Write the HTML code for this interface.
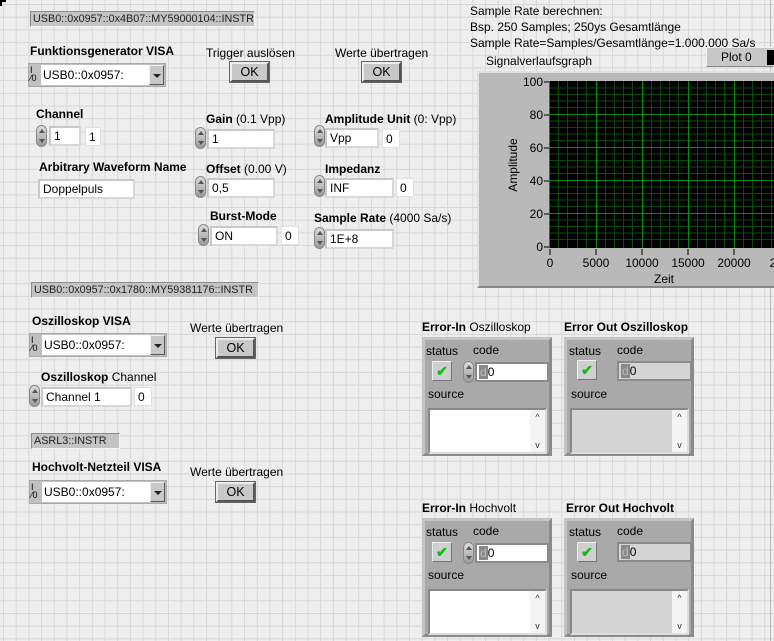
<!DOCTYPE html>
<html><head><meta charset="utf-8"><style>
*{box-sizing:border-box;margin:0;padding:0}
body{width:774px;height:641px;overflow:hidden;position:relative;font-family:"Liberation Sans",sans-serif;font-size:12px;color:#000;
background-color:#eeeeee;
background-image:linear-gradient(to right,#d6d6d6 1px,transparent 1px),linear-gradient(to bottom,#d6d6d6 1px,transparent 1px);
background-size:12.7px 12.7px;background-position:3px 4px}
.a{position:absolute;white-space:nowrap}
.b{font-weight:bold}
.lbl{position:absolute;background:#c4c4c4;border:1px solid #8c8c8c;border-right-color:#f4f4f4;border-bottom-color:#f4f4f4;height:16px;line-height:14px;padding-left:2px;font-size:10.8px;color:#222;overflow:hidden;white-space:nowrap}
.fld{position:absolute;background:#fff;border:2px solid #d8d8d8;border-top-color:#c8c8c8;border-left-color:#c8c8c8;height:20px;line-height:16px;padding-left:3px}
.ind{position:absolute;background:#fff;height:19px;line-height:19px;padding-left:3px;border:1px solid #e0e0e0}
.ok{position:absolute;width:39px;height:20px;background:#c8c8c8;border:2px solid #555;border-top-color:#eee;border-left-color:#eee;text-align:center;line-height:16px;font-size:12.5px;outline:1px solid #666}
.spin{position:absolute;width:11px;height:22px;border-radius:6px;background:linear-gradient(#ddd,#999);border:1px solid #888}
.spin:before{content:"";position:absolute;left:2px;top:3px;border:3px solid transparent;border-bottom:4px solid #555;border-top:0}
.spin:after{content:"";position:absolute;left:2px;bottom:3px;border:3px solid transparent;border-top:4px solid #555;border-bottom:0}
.visa{position:absolute;width:138px;height:24px;background:#c0c0c0;border:1px solid #aaa}
.visa .w{position:absolute;left:12px;top:1px;width:110px;height:20px;background:#fff;line-height:20px;padding-left:2px}
.visa .io{position:absolute;left:1px;top:2px;font-size:9px;line-height:8px}
.visa .dd{position:absolute;right:1px;top:1px;width:15px;height:20px;background:#c8c8c8;border:1px solid #555;border-top-color:#eee;border-left-color:#eee}
.visa .dd:after{content:"";position:absolute;left:3px;top:8px;border:4px solid transparent;border-top:4px solid #222;border-bottom:0}
.cl{position:absolute;background:#a9a9a9;border:3px solid #c4c4c4;border-right-color:#8a8a8a;border-bottom-color:#8a8a8a;width:130px;height:119px}
.cl .t{position:absolute;font-size:12px}
.chk{position:absolute;width:20px;height:20px;background:#cfcfcf;border:1px solid #777;border-top-color:#eee;border-left-color:#eee;color:#1b1;font-weight:bold;text-align:center;line-height:18px;font-size:14px}
.code{position:absolute;height:20px;border:2px solid #8a8a8a;line-height:16px;padding-left:2px}
.code i{font-style:normal;color:#bbb;background:#888;padding:0 1px}
.src{position:absolute;left:3px;top:68px;width:119px;height:46px;border:2px solid #888;border-right-color:#ddd;border-bottom-color:#ddd}
.sb{position:absolute;right:0;top:0;width:15px;height:42px;background:#f4f4f4;font-size:9px;text-align:center;line-height:14px;color:#333}
</style></head><body>
<div style="position:absolute;left:0;top:0;width:6px;height:6px;border-left:2px solid #000;border-top:2px solid #000"></div>
<div style="position:absolute;left:770px;top:0;width:1px;height:641px;background:#bbb"></div>

<div class="lbl" style="left:30px;top:11px;width:225px">USB0::0x0957::0x4B07::MY59000104::INSTR</div>
<div class="a b" style="left:30px;top:44px">Funktionsgenerator VISA</div>
<div class="visa" style="left:28px;top:63px"><div class="io">I<br>⁄0</div><div class="w">USB0::0x0957:</div><div class="dd"></div></div>
<div class="a" style="left:206px;top:46px">Trigger auslösen</div>
<div class="ok" style="left:230px;top:62px">OK</div>
<div class="a" style="left:335px;top:46px">Werte übertragen</div>
<div class="ok" style="left:362px;top:62px">OK</div>

<div class="a b" style="left:36px;top:107px">Channel</div>
<div class="spin" style="left:36px;top:125px"></div>
<div class="fld" style="left:49px;top:126px;width:32px">1</div>
<div class="ind" style="left:85px;top:127px;width:16px">1</div>

<div class="a" style="left:206px;top:112px"><b>Gain</b> (0.1 Vpp)</div>
<div class="spin" style="left:195px;top:127px"></div>
<div class="fld" style="left:207px;top:129px;width:68px">1</div>
<div class="a" style="left:325px;top:112px"><b>Amplitude Unit</b> (0: Vpp)</div>
<div class="spin" style="left:314px;top:125px"></div>
<div class="fld" style="left:325px;top:128px;width:54px">Vpp</div>
<div class="ind" style="left:382px;top:129px;width:18px">0</div>

<div class="a b" style="left:39px;top:160px">Arbitrary Waveform Name</div>
<div class="fld" style="left:38px;top:179px;width:97px">Doppelpuls</div>
<div class="a" style="left:206px;top:162px"><b>Offset</b> (0.00 V)</div>
<div class="spin" style="left:195px;top:176px"></div>
<div class="fld" style="left:207px;top:178px;width:68px">0,5</div>
<div class="a b" style="left:325px;top:162px">Impedanz</div>
<div class="spin" style="left:314px;top:175px"></div>
<div class="fld" style="left:325px;top:178px;width:69px">INF</div>
<div class="ind" style="left:396px;top:178px;width:18px">0</div>

<div class="a b" style="left:210px;top:209px">Burst-Mode</div>
<div class="spin" style="left:198px;top:224px"></div>
<div class="fld" style="left:210px;top:226px;width:68px">ON</div>
<div class="ind" style="left:281px;top:226px;width:18px">0</div>
<div class="a" style="left:314px;top:211px"><b>Sample Rate</b> (4000 Sa/s)</div>
<div class="spin" style="left:314px;top:227px"></div>
<div class="fld" style="left:325px;top:229px;width:69px">1E+8</div>

<div class="a" style="left:470px;top:3px;line-height:16px">Sample Rate berechnen:<br>Bsp. 250 Samples; 250ys Gesamtlänge<br>Sample Rate=Samples/Gesamtlänge=1.000.000 Sa/s</div>
<div class="a" style="left:486px;top:54px">Signalverlaufsgraph</div>
<div style="position:absolute;left:706px;top:47px;width:68px;height:20px;background:#c8c8c8;border:1px solid #eee;border-bottom-color:#888"><span class="a" style="left:14px;top:2px">Plot 0</span><div style="position:absolute;left:60px;top:2px;width:10px;height:15px;background:#000"></div></div>
<div style="position:absolute;left:477px;top:71px;width:297px;height:217px;background:#b9b9b9;border:2px solid #e0e0e0;border-right:0;border-bottom-color:#888"></div>
<svg style="position:absolute;left:477px;top:71px" width="297" height="217" font-family="Liberation Sans" font-size="12">
<rect x="72" y="10" width="225" height="167" fill="#000"/>
<g stroke="#0c4a0c" stroke-width="1">
<path d="M81.5 10V177M90.5 10V177M100.5 10V177M109.5 10V177M128.5 10V177M137.5 10V177M146.5 10V177M155.5 10V177M174.5 10V177M183.5 10V177M192.5 10V177M201.5 10V177M220.5 10V177M229.5 10V177M238.5 10V177M247.5 10V177M266.5 10V177M275.5 10V177M284.5 10V177M294.5 10V177"/>
<path d="M72 17H297M72 23.5H297M72 30H297M72 36.5H297M72 50H297M72 56.5H297M72 63H297M72 69.5H297M72 83H297M72 89.5H297M72 96H297M72 102.5H297M72 116H297M72 122.5H297M72 129H297M72 135.5H297M72 149H297M72 155.5H297M72 162H297M72 168.5H297"/>
</g>
<g stroke="#0a8a0a"><path d="M72.5 10V177M119.5 10V177M165.5 10V177M211.5 10V177M257.5 10V177M72 43.5H297M72 76.5H297M72 109.5H297M72 142.5H297"/></g>
<g stroke="#000"><path d="M67 11H72M67 44H72M67 77H72M67 110H72M67 143H72M67 176H72M73 178V184M119 178V184M165 178V184M211 178V184M257 178V184"/></g>
<g text-anchor="end"><text x="66" y="15">100</text><text x="66" y="48">80</text><text x="66" y="81">60</text><text x="66" y="114">40</text><text x="66" y="147">20</text><text x="66" y="180">0</text></g>
<g text-anchor="middle"><text x="73" y="196">0</text><text x="119" y="196">5000</text><text x="165" y="196">10000</text><text x="211" y="196">15000</text><text x="257" y="196">20000</text><text x="296" y="196">2</text><text x="187" y="212">Zeit</text>
<text transform="translate(40,94) rotate(-90)">Amplitude</text></g>
</svg>

<div class="lbl" style="left:31px;top:282px;width:228px">USB0::0x0957::0x1780::MY59381176::INSTR</div>
<div class="a b" style="left:32px;top:314px">Oszilloskop VISA</div>
<div class="visa" style="left:29px;top:333px"><div class="io">I<br>⁄0</div><div class="w">USB0::0x0957:</div><div class="dd"></div></div>
<div class="a" style="left:190px;top:321px">Werte übertragen</div>
<div class="ok" style="left:216px;top:338px">OK</div>
<div class="a" style="left:41px;top:370px"><b>Oszilloskop</b> Channel</div>
<div class="spin" style="left:29px;top:385px"></div>
<div class="fld" style="left:41px;top:387px;width:91px">Channel 1</div>
<div class="ind" style="left:134px;top:387px;width:18px">0</div>

<div class="lbl" style="left:31px;top:433px;width:89px">ASRL3::INSTR</div>
<div class="a b" style="left:32px;top:460px">Hochvolt-Netzteil VISA</div>
<div class="visa" style="left:29px;top:480px"><div class="io">I<br>⁄0</div><div class="w">USB0::0x0957:</div><div class="dd"></div></div>
<div class="a" style="left:190px;top:465px">Werte übertragen</div>
<div class="ok" style="left:216px;top:482px">OK</div>

<div class="a" style="left:422px;top:320px"><b>Error-In</b> Oszilloskop</div>
<div class="cl" style="left:422px;top:337px"><span class="t" style="left:1px;top:4px">status</span><span class="t" style="left:48px;top:3px">code</span><div class="chk" style="left:7px;top:21px">✔</div><div class="spin" style="left:38px;top:21px"></div><div class="code" style="left:50px;top:22px;width:74px;background:#fff"><i>d</i>0</div><span class="t" style="left:3px;top:47px">source</span><div class="src" style="background:#fff"><div class="sb">^<br><br>v</div></div></div>
<div class="a b" style="left:564px;top:320px">Error Out Oszilloskop</div>
<div class="cl" style="left:564px;top:337px"><span class="t" style="left:2px;top:4px">status</span><span class="t" style="left:50px;top:3px">code</span><div class="chk" style="left:10px;top:20px">✔</div><div class="code" style="left:50px;top:21px;width:75px;background:#d4d4d4"><i>d</i>0</div><span class="t" style="left:4px;top:47px">source</span><div class="src" style="background:#d4d4d4"><div class="sb">^<br><br>v</div></div></div>

<div class="a" style="left:422px;top:501px"><b>Error-In</b> Hochvolt</div>
<div class="cl" style="left:422px;top:518px"><span class="t" style="left:1px;top:4px">status</span><span class="t" style="left:48px;top:3px">code</span><div class="chk" style="left:7px;top:21px">✔</div><div class="spin" style="left:38px;top:21px"></div><div class="code" style="left:50px;top:22px;width:74px;background:#fff"><i>d</i>0</div><span class="t" style="left:3px;top:47px">source</span><div class="src" style="background:#fff"><div class="sb">^<br><br>v</div></div></div>
<div class="a b" style="left:566px;top:501px">Error Out Hochvolt</div>
<div class="cl" style="left:564px;top:518px"><span class="t" style="left:2px;top:4px">status</span><span class="t" style="left:50px;top:3px">code</span><div class="chk" style="left:10px;top:21px">✔</div><div class="code" style="left:50px;top:21px;width:75px;background:#d4d4d4"><i>d</i>0</div><span class="t" style="left:4px;top:47px">source</span><div class="src" style="background:#d4d4d4"><div class="sb">^<br><br>v</div></div></div>
</body></html>
